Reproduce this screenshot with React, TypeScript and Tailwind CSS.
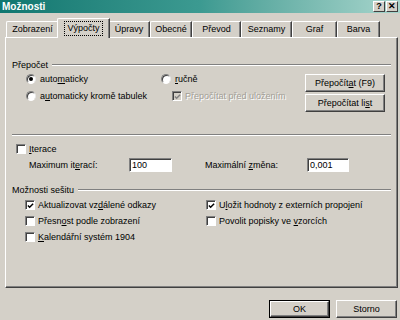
import React from "react";

const U = ({ children }: { children: React.ReactNode }) => (
  <span className="underline underline-offset-[1px]">{children}</span>
);

const Check = ({ checked, disabled }: { checked?: boolean; disabled?: boolean }) => (
  <span
    className={`relative inline-flex items-center justify-center w-[10px] h-[10px] shrink-0 border border-t-[#808080] border-l-[#808080] border-b-white border-r-white shadow-[inset_1px_1px_0_#404040] ${
      disabled ? "bg-[#d4d0c8]" : "bg-white"
    }`}
  >
    {checked && (
      <svg width="8" height="8" viewBox="0 0 8 8" className="ml-[1px] mt-[1px]">
        <polyline
          points="1,3.5 3,5.5 7,1.5"
          fill="none"
          stroke={disabled ? "#808080" : "#000"}
          strokeWidth="1.7"
        />
      </svg>
    )}
  </span>
);

const Radio = ({ checked }: { checked?: boolean }) => (
  <span className="inline-flex items-center justify-center w-[10px] h-[10px] shrink-0 rounded-full bg-white border border-t-[#808080] border-l-[#808080] border-b-white border-r-[#e8e8e8] shadow-[inset_1px_1px_0_#404040]">
    {checked && <span className="w-[4px] h-[4px] rounded-full bg-black" />}
  </span>
);

const Btn = ({ children, w, def }: { children: React.ReactNode; w: string; def?: boolean }) => (
  <div className={`${w} h-[18px] ${def ? "border border-black" : ""}`}>
    <div className="h-full flex items-center justify-center border border-white border-r-[#404040] border-b-[#404040] shadow-[inset_-1px_-1px_0_#808080] bg-[#d4d0c8]">
      {children}
    </div>
  </div>
);

const Group = ({ label }: { label: string }) => (
  <div className="mx-[6px] h-[12px] flex items-center">
    <span>{label}</span>
    <div className="flex-1 ml-[4px] h-[2px] border-t border-[#808080] border-b border-b-white" />
  </div>
);

const tabs = [
  { label: "Zobrazení", w: "w-[53px]" },
  { label: "Výpočty", w: "w-[53px]", sel: true },
  { label: "Úpravy", w: "w-[42px]" },
  { label: "Obecné", w: "w-[42px]" },
  { label: "Převod", w: "w-[49px]" },
  { label: "Seznamy", w: "w-[51px]" },
  { label: "Graf", w: "w-[45px]" },
  { label: "Barva", w: "w-[43px]" },
];

export default function App() {
  return (
    <div className="w-[400px] h-[320px] overflow-hidden bg-[#d4d0c8] text-black text-[9px] leading-none font-['Liberation_Sans',Arial,sans-serif]">
      {/* title bar */}
      <div className="h-[13px] flex items-center justify-between bg-gradient-to-r from-[#0f7770] via-[#3c9a91] to-[#a8d6cd]">
        <span className="pl-[2px] text-white font-bold text-[10px]">Možnosti</span>
        <div className="flex gap-[1px] pr-[2px]">
          <div className="w-[12px] h-[11px] flex items-center justify-center bg-[#d4d0c8] border border-white border-r-[#404040] border-b-[#404040] font-bold text-[9px]">
            ?
          </div>
          <div className="w-[12px] h-[11px] flex items-center justify-center bg-[#d4d0c8] border border-white border-r-[#404040] border-b-[#404040] font-bold text-[9px]">
            ✕
          </div>
        </div>
      </div>

      {/* tabs */}
      <div className="h-[24px] flex items-end pl-[6px]">
        {tabs.map((t) =>
          t.sel ? (
            <div
              key={t.label}
              className={`relative z-10 -mx-[2px] -mb-[1px] h-[20px] ${t.w} flex items-center justify-center bg-[#d4d0c8] border-t border-l border-white border-r border-r-[#404040] rounded-tl-[2px] shadow-[inset_-1px_0_0_#808080]`}
            >
              <span className="px-[2px] py-[2px] outline outline-1 outline-dotted outline-black">{t.label}</span>
            </div>
          ) : (
            <div
              key={t.label}
              className={`h-[16px] ${t.w} flex items-center justify-center border-t border-l border-white border-r border-r-[#404040] rounded-tl-[2px] shadow-[inset_-1px_0_0_#808080]`}
            >
              {t.label}
            </div>
          )
        )}
      </div>

      {/* panel */}
      <div className="ml-[5px] w-[393px] h-[251px] flex flex-col border border-t-white border-l-white border-r-[#404040] border-b-[#404040] shadow-[inset_-1px_-1px_0_#808080]">
        <div className="mt-[21px]">
          <Group label="Přepočet" />
        </div>

        <div className="mt-[1px] flex">
          <div className="ml-[20px] w-[135px] flex flex-col">
            <div className="h-[14px] flex items-center gap-[4px]">
              <Radio checked />
              <span>
                auto<U>m</U>aticky
              </span>
            </div>
            <div className="mt-[3px] h-[14px] flex items-center gap-[4px]">
              <Radio />
              <span>
                a<U>u</U>tomaticky kromě tabulek
              </span>
            </div>
          </div>
          <div className="flex-1 flex flex-col">
            <div className="h-[14px] flex items-center gap-[4px]">
              <Radio />
              <span>
                <U>r</U>učně
              </span>
            </div>
            <div className="mt-[3px] ml-[11px] h-[14px] flex items-center gap-[3px] text-[#a29e96]">
              <Check checked disabled />
              <span className="[text-shadow:1px_1px_0_#fff]">Přepočítat před uložením</span>
            </div>
          </div>
          <div className="mr-[12px] mt-[2px] flex flex-col gap-[2px]">
            <Btn w="w-[80px]">
              <span>
                Přepočít<U>a</U>t (F9)
              </span>
            </Btn>
            <Btn w="w-[80px]">
              <span>
                Přepočítat li<U>s</U>t
              </span>
            </Btn>
          </div>
        </div>

        <div className="mt-[22px] mx-[6px] h-[2px] border-t border-[#808080] border-b border-b-white" />

        <div className="mt-[7px] ml-[10px] h-[12px] flex items-center gap-[3px]">
          <Check />
          <span>
            <U>I</U>terace
          </span>
        </div>

        <div className="mt-[3px] ml-[23px] h-[14px] flex items-center">
          <span className="w-[100px]">
            Maximum it<U>e</U>rací:
          </span>
          <div className="w-[43px] h-[14px] flex items-center pl-[2px] bg-white border border-t-[#808080] border-l-[#808080] border-b-white border-r-white shadow-[inset_1px_1px_0_#404040]">
            100
          </div>
          <span className="ml-[33px] w-[102px]">
            Maximální <U>z</U>měna:
          </span>
          <div className="w-[42px] h-[14px] flex items-center pl-[2px] bg-white border border-t-[#808080] border-l-[#808080] border-b-white border-r-white shadow-[inset_1px_1px_0_#404040]">
            0,001
          </div>
        </div>

        <div className="mt-[12px]">
          <Group label="Možnosti sešitu" />
        </div>

        <div className="mt-[1px] ml-[19px] grid grid-cols-[181px_1fr] auto-rows-[16px]">
          <div className="flex items-center gap-[3px]">
            <Check checked />
            <span>
              Aktualizovat vz<U>d</U>álené odkazy
            </span>
          </div>
          <div className="flex items-center gap-[3px]">
            <Check checked />
            <span>
              U<U>l</U>ožit hodnoty z externích propojení
            </span>
          </div>
          <div className="flex items-center gap-[3px]">
            <Check />
            <span>
              Přesn<U>o</U>st podle zobrazení
            </span>
          </div>
          <div className="flex items-center gap-[3px]">
            <Check />
            <span>
              Povolit popisky ve <U>v</U>zorcích
            </span>
          </div>
          <div className="flex items-center gap-[3px]">
            <Check />
            <span>
              <U>K</U>alendářní systém 1904
            </span>
          </div>
        </div>
      </div>

      {/* dialog buttons */}
      <div className="mt-[12px] pr-[3px] flex justify-end gap-[6px]">
        <Btn w="w-[61px]" def>
          OK
        </Btn>
        <Btn w="w-[61px]">Storno</Btn>
      </div>
    </div>
  );
}
